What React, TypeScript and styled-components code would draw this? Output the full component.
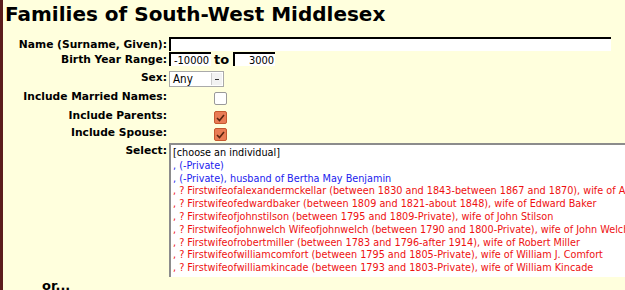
import React from 'react'
import styled, { createGlobalStyle } from 'styled-components'

const GlobalStyle = createGlobalStyle`
  html, body {
    margin: 0;
    padding: 0;
    background: #ffffdd;
    overflow: hidden;
  }
`

const Page = styled.div`
  border-left: 3px solid #5c1c1c;
  min-height: 290px;
  padding-left: 2px;
  font-family: 'DejaVu Sans', Verdana, sans-serif;
  color: #000;
`

const Title = styled.h1`
  font-size: 20px;
  font-weight: bold;
  margin: 0;
  padding-top: 1px;
  line-height: 27px;
`

const Form = styled.div`
  display: grid;
  grid-template-columns: 162px 1fr;
  column-gap: 2px;
  margin-top: 9px;
`

const Label = styled.div<{ $h: number }>`
  font-size: 10.7px;
  font-weight: bold;
  text-align: right;
  height: ${p => p.$h}px;
  line-height: 15px;
  white-space: nowrap;
`

const Cell = styled.div<{ $h: number }>`
  height: ${p => p.$h}px;
  display: flex;
  align-items: flex-start;
`

const TextBox = styled.div<{ $w: number; $align?: string }>`
  width: ${p => p.$w}px;
  height: 12px;
  background: #fff;
  border-top: 2px solid #000;
  border-left: 2px solid #000;
  font-family: 'DejaVu Sans Condensed', 'DejaVu Sans', sans-serif;
  font-stretch: condensed;
  font-size: 11px;
  line-height: 14px;
  padding: 0 1px 0 3px;
  text-align: ${p => p.$align || 'left'};
  overflow: hidden;
  white-space: nowrap;
  box-sizing: content-box;
`

const To = styled.span`
  font-size: 13px;
  font-weight: bold;
  margin: 0 4px 0 3px;
  line-height: 15px;
`

const Dropdown = styled.div`
  width: 53px;
  height: 14px;
  background: #fff;
  border: 1px solid #aaa;
  display: flex;
  align-items: center;
  font-family: 'DejaVu Sans Condensed', 'DejaVu Sans', sans-serif;
  font-stretch: condensed;
  font-size: 11.5px;
  margin-top: 1px;
`

const DropText = styled.span`
  flex: 1;
  padding-left: 3px;
`

const DropButton = styled.span`
  width: 10px;
  height: 12px;
  margin-right: 1px;
  background: #f2f2f2;
  border-left: 1px solid #ccc;
  display: flex;
  align-items: center;
  justify-content: center;
  &::after {
    content: '';
    width: 4px;
    border-top: 1px solid #333;
  }
`

const Check = styled.span<{ $on?: boolean }>`
  display: inline-flex;
  align-items: center;
  justify-content: center;
  width: 11px;
  height: 11px;
  margin-left: 45px;
  margin-top: 3px;
  border-radius: 2px;
  border: 1px solid ${p => (p.$on ? '#c5582f' : '#9a9a9a')};
  background: ${p => (p.$on ? '#e97c55' : '#fff')};
`

const ListBox = styled.div`
  width: 470px;
  height: 134px;
  background: #fff;
  border-top: 2px solid #8c8c8c;
  border-left: 2px solid #8c8c8c;
  font-family: 'DejaVu Sans Condensed', 'DejaVu Sans', sans-serif;
  font-stretch: condensed;
  font-size: 10.75px;
  line-height: 12.8px;
  padding: 2px 0 0 2px;
  white-space: nowrap;
  overflow: hidden;
  box-sizing: border-box;
`

const Option = styled.div<{ $c: string }>`
  color: ${p => p.$c};
`

const Or = styled.div`
  font-size: 13px;
  font-weight: bold;
  margin: 1px 0 0 37px;
`

const options: Array<[string, string]> = [
  ['#000', '[choose an individual]'],
  ['#2222ee', ', (-Private)'],
  ['#2222ee', ', (-Private), husband of Bertha May Benjamin'],
  ['#ee1111', ', ? Firstwifeofalexandermckellar (between 1830 and 1843-between 1867 and 1870), wife of Alexander McKellar'],
  ['#ee1111', ', ? Firstwifeofedwardbaker (between 1809 and 1821-about 1848), wife of Edward Baker'],
  ['#ee1111', ', ? Firstwifeofjohnstilson (between 1795 and 1809-Private), wife of John Stilson'],
  ['#ee1111', ', ? Firstwifeofjohnwelch Wifeofjohnwelch (between 1790 and 1800-Private), wife of John Welch'],
  ['#ee1111', ', ? Firstwifeofrobertmiller (between 1783 and 1796-after 1914), wife of Robert Miller'],
  ['#ee1111', ', ? Firstwifeofwilliamcomfort (between 1795 and 1805-Private), wife of William J. Comfort'],
  ['#ee1111', ', ? Firstwifeofwilliamkincade (between 1793 and 1803-Private), wife of William Kincade'],
]

const Tick = () => (
  <svg width="9" height="8" viewBox="0 0 9 8">
    <path d="M1 4 L3.5 6.5 L8 1" stroke="#5a2410" strokeWidth="1.6" fill="none" />
  </svg>
)

export default function App() {
  return (
    <Page>
      <GlobalStyle />
      <Title>Families of South-West Middlesex</Title>
      <Form>
        <Label $h={15}>Name (Surname, Given):</Label>
        <Cell $h={15}>
          <TextBox $w={436} />
        </Cell>

        <Label $h={18}>Birth Year Range:</Label>
        <Cell $h={18}>
          <TextBox $w={36}>-10000</TextBox>
          <To>to</To>
          <TextBox $w={36} $align="right">3000</TextBox>
        </Cell>

        <Label $h={19}>Sex:</Label>
        <Cell $h={19}>
          <Dropdown>
            <DropText>Any</DropText>
            <DropButton />
          </Dropdown>
        </Cell>

        <Label $h={19}>Include Married Names:</Label>
        <Cell $h={19}>
          <Check />
        </Cell>

        <Label $h={17}>Include Parents:</Label>
        <Cell $h={17}>
          <Check $on>
            <Tick />
          </Check>
        </Cell>

        <Label $h={18}>Include Spouse:</Label>
        <Cell $h={18}>
          <Check $on>
            <Tick />
          </Check>
        </Cell>

        <Label $h={134}>Select:</Label>
        <Cell $h={134}>
          <ListBox>
            {options.map(([c, t], i) => (
              <Option key={i} $c={c}>
                {t}
              </Option>
            ))}
          </ListBox>
        </Cell>
      </Form>
      <Or>or...</Or>
    </Page>
  )
}
